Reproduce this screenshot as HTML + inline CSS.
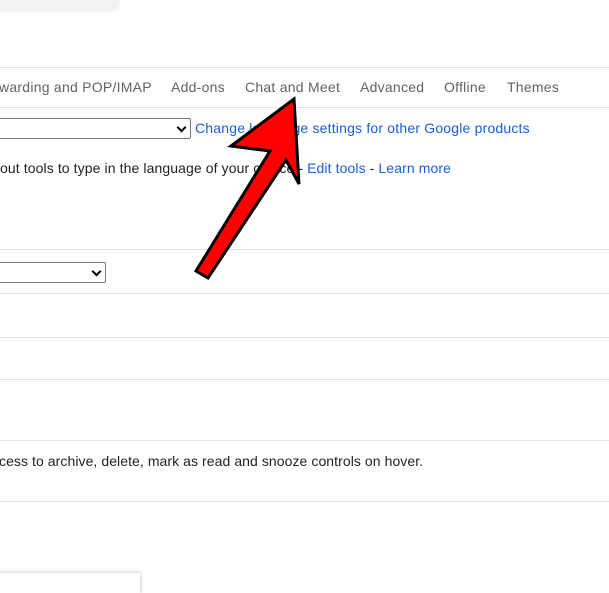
<!DOCTYPE html>
<html><head><style>
body{margin:0;width:609px;height:585px;background:#fff;position:relative;overflow:hidden;font-family:"Liberation Sans",Arial,sans-serif;}
.l{position:absolute;left:0;width:609px;height:1px;background:#e3e3e3}
.t{position:absolute;white-space:nowrap;font-size:14px}
.tab{color:#5f6368;top:79px;letter-spacing:0.25px}
a{color:#1a5fd6;text-decoration:none}
.sel{position:absolute;left:-2px;border:1px solid #767676;border-radius:2px;background:#fff}
.chev{position:absolute;right:5px;top:5px;width:5px;height:5px;border-right:2px solid #000;border-bottom:2px solid #000;transform:rotate(45deg)}
</style></head><body>
<div style="position:absolute;left:-10px;top:-10px;width:130px;height:22px;background:#f1f3f4;border-radius:10px"></div>
<div class="l" style="top:67px"></div>
<div class="t tab" style="left:-1px">warding and POP/IMAP</div>
<div class="t tab" style="left:171px">Add-ons</div>
<div class="t tab" style="left:245px">Chat and Meet</div>
<div class="t tab" style="left:360px">Advanced</div>
<div class="t tab" style="left:444px">Offline</div>
<div class="t tab" style="left:507px">Themes</div>
<div class="l" style="top:107px"></div>
<div class="sel" style="top:118px;width:191px;height:19px"><div class="chev"></div></div>
<div class="t" style="left:195px;top:120px;letter-spacing:0.19px"><a>Change language settings for other Google products</a></div>
<div class="t" style="left:0;top:160px;color:#222;letter-spacing:0.1px">out tools to type in the language of your choice - <a>Edit tools</a> - <a>Learn more</a></div>
<div class="l" style="top:249px"></div>
<div class="sel" style="top:262px;width:106px;height:19px"><div class="chev"></div></div>
<div class="l" style="top:293px"></div>
<div class="l" style="top:337px"></div>
<div class="l" style="top:379px"></div>
<div class="l" style="top:440px"></div>
<div class="t" style="left:-1px;top:453px;color:#222;letter-spacing:0.07px">cess to archive, delete, mark as read and snooze controls on hover.</div>
<div class="l" style="top:501px"></div>
<div style="position:absolute;left:-5px;top:573px;width:145px;height:20px;background:#fff;box-shadow:0 0 4px rgba(0,0,0,0.3)"></div>
<svg style="position:absolute;left:0;top:0" width="609" height="585">
<polygon points="294,99 299,184 286,160 208,278 196,271 270,151 231,146" fill="#f00" stroke="#000" stroke-width="3" stroke-linejoin="miter"/>
</svg>
</body></html>
